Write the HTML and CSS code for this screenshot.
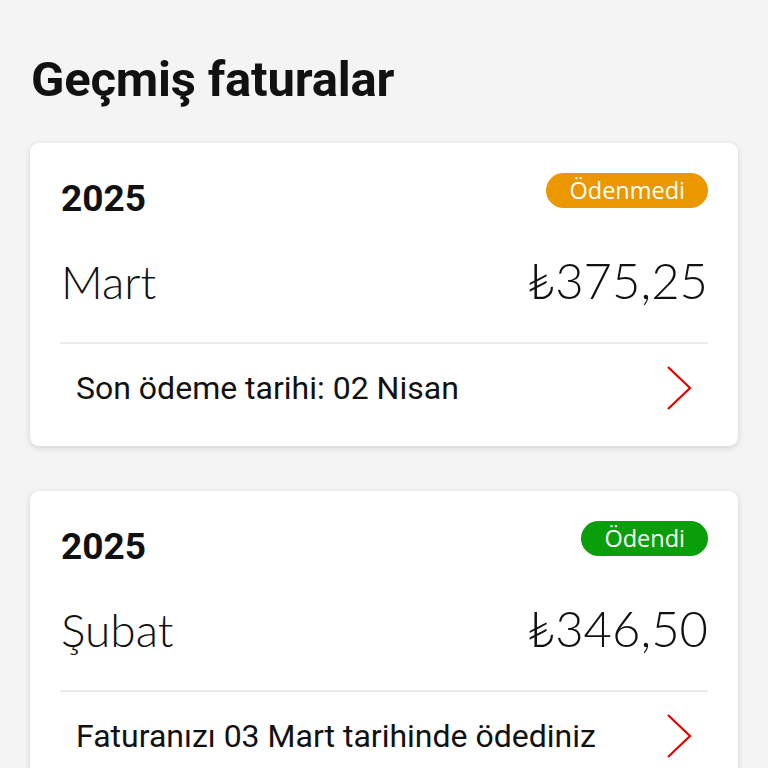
FILE: index.html
```html
<!DOCTYPE html>
<html lang="tr">
<head>
<meta charset="utf-8">
<link rel="stylesheet" href="styles.css">
</head>
<body>
<main class="page">
  <h1 class="title">Geçmiş faturalar</h1>
  <section class="card">
    <div class="card-top">
      <div class="row-head">
        <span class="year">2025</span>
        <span class="badge badge-unpaid">Ödenmedi</span>
      </div>
      <div class="row-amount">
        <span class="month">Mart</span>
        <span class="amount">₺375,25</span>
      </div>
    </div>
    <div class="card-foot">
      <span class="foot-text">Son ödeme tarihi: 02 Nisan</span>
      <svg class="chev" viewBox="0 0 26 46" width="26" height="46"><path d="M2 2 L24 23 L2 44" fill="none" stroke="#e60000" stroke-width="2.2"/></svg>
    </div>
  </section>
  <section class="card">
    <div class="card-top">
      <div class="row-head">
        <span class="year">2025</span>
        <span class="badge badge-paid">Ödendi</span>
      </div>
      <div class="row-amount">
        <span class="month">Şubat</span>
        <span class="amount">₺346,50</span>
      </div>
    </div>
    <div class="card-foot">
      <span class="foot-text">Faturanızı 03 Mart tarihinde ödediniz</span>
      <svg class="chev" viewBox="0 0 26 46" width="26" height="46"><path d="M2 2 L24 23 L2 44" fill="none" stroke="#e60000" stroke-width="2.2"/></svg>
    </div>
  </section>
</main>
</body>
</html>
```
FILE: styles.css
```css
html, body {
  margin: 0;
  padding: 0;
  background: #f4f4f4;
}
body {
  font-family: Roboto, "Liberation Sans", sans-serif;
  color: #111;
}
.page {
  padding: 52px 30px 0 30px;
  display: flex;
  flex-direction: column;
  gap: 45px;
}
.title {
  margin: 0 0 -10px 1px;
  font-size: 49px;
  font-weight: 700;
  line-height: 56px;
  color: #111;
  letter-spacing: -0.2px;
}
.card {
  background: #fff;
  border-radius: 9px;
  box-shadow: 0 2px 6px rgba(0,0,0,0.14);
  padding: 0 30px;
  display: flex;
  flex-direction: column;
}
.card-top {
  padding: 30px 0 0;
  border-bottom: 2px solid #ececec;
  height: 201px;
  box-sizing: border-box;
}
.row-head {
  display: flex;
  justify-content: space-between;
  align-items: flex-start;
}
.year {
  font-size: 37px;
  font-weight: 700;
  line-height: 40px;
  margin-top: 6px;
  margin-left: 1px;
}
.badge {
  font-family: "Open Sans", "Noto Sans", sans-serif;
  color: #fff;
  font-size: 23.5px;
  line-height: 35px;
  height: 35px;
  padding: 0 23px;
  border-radius: 18px;
}
.badge-unpaid { background: #eb9700; }
.badge-paid { background: #0a9e0a; }
.row-amount {
  display: flex;
  justify-content: space-between;
  align-items: baseline;
  margin-top: 33px;
}
.month, .amount {
  font-family: Lato, "Noto Sans", sans-serif;
  font-weight: 300;
  line-height: 56px;
  color: #111;
}
.month { margin-left: 1px; font-size: 46px; }
.amount { font-size: 49px; }
.card-foot {
  display: flex;
  justify-content: space-between;
  align-items: center;
  height: 102px;
  padding: 0 16px 14px 16px;
  box-sizing: border-box;
}
.foot-text {
  font-size: 32px;
  color: #111;
}
.chev { display: block; }
```
